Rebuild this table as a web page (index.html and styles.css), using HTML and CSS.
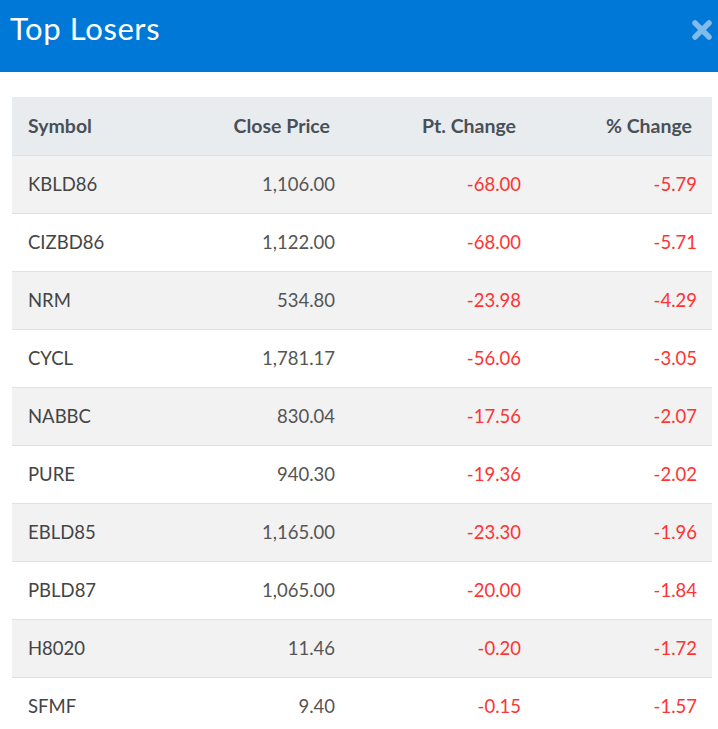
FILE: index.html
```html
<!DOCTYPE html>
<html>
<head>
<meta charset="utf-8">
<link rel="stylesheet" href="styles.css">
</head>
<body>
<div class="modal">
  <div class="modal-header">
    <h1 class="title">Top Losers</h1>
    <button class="close" aria-label="Close">
      <svg width="22" height="22" viewBox="0 0 22 22"><path d="M4 4 L18 18 M18 4 L4 18" stroke="#80bbec" stroke-width="5.5" stroke-linecap="round" fill="none"/></svg>
    </button>
  </div>
  <div class="modal-body">
    <table class="losers">
      <colgroup>
        <col class="c1"><col class="c2"><col class="c3"><col class="c4">
      </colgroup>
      <thead>
        <tr><th class="left">Symbol</th><th>Close Price</th><th>Pt. Change</th><th>% Change</th></tr>
      </thead>
      <tbody>
        <tr><td class="left">KBLD86</td><td>1,106.00</td><td class="neg">-68.00</td><td class="neg">-5.79</td></tr>
        <tr><td class="left">CIZBD86</td><td>1,122.00</td><td class="neg">-68.00</td><td class="neg">-5.71</td></tr>
        <tr><td class="left">NRM</td><td>534.80</td><td class="neg">-23.98</td><td class="neg">-4.29</td></tr>
        <tr><td class="left">CYCL</td><td>1,781.17</td><td class="neg">-56.06</td><td class="neg">-3.05</td></tr>
        <tr><td class="left">NABBC</td><td>830.04</td><td class="neg">-17.56</td><td class="neg">-2.07</td></tr>
        <tr><td class="left">PURE</td><td>940.30</td><td class="neg">-19.36</td><td class="neg">-2.02</td></tr>
        <tr><td class="left">EBLD85</td><td>1,165.00</td><td class="neg">-23.30</td><td class="neg">-1.96</td></tr>
        <tr><td class="left">PBLD87</td><td>1,065.00</td><td class="neg">-20.00</td><td class="neg">-1.84</td></tr>
        <tr><td class="left">H8020</td><td>11.46</td><td class="neg">-0.20</td><td class="neg">-1.72</td></tr>
        <tr><td class="left">SFMF</td><td>9.40</td><td class="neg">-0.15</td><td class="neg">-1.57</td></tr>
      </tbody>
    </table>
  </div>
</div>
</body>
</html>
```

FILE: styles.css
```css
html, body {
  margin: 0;
  padding: 0;
  background: #ffffff;
  font-family: Lato, "Noto Sans", sans-serif;
}

.modal {
  width: 718px;
}

.modal-header {
  height: 72px;
  background: #0078d7;
  display: flex;
  align-items: flex-start;
  justify-content: space-between;
  box-sizing: border-box;
  padding: 0 5px 0 10px;
}

.title {
  margin: 0;
  padding-top: 10px;
  color: #ffffff;
  font-size: 31px;
  font-weight: 400;
  line-height: 36px;
  letter-spacing: 0.6px;
}

.close {
  margin-top: 19px;
  padding: 0;
  border: 0;
  background: transparent;
  width: 22px;
  height: 22px;
  display: flex;
}

.modal-body {
  padding: 25px 6px 0 12px;
}

.losers {
  width: 700px;
  border-collapse: collapse;
  table-layout: fixed;
  font-size: 18.5px;
}

.c1 { width: 170px; }
.c2 { width: 168px; }
.c3 { width: 186px; }
.c4 { width: 176px; }

.losers th {
  height: 58px;
  box-sizing: border-box;
  background: #e9ecef;
  color: #495057;
  font-size: 19.5px;
  font-weight: 700;
  text-align: right;
  padding: 0 20px 0 16px;
  border-bottom: 1px solid #dee2e6;
  vertical-align: middle;
}

.losers td {
  height: 58px;
  box-sizing: border-box;
  text-align: right;
  color: #444444;
  padding: 0 15px 0 16px;
  border-bottom: 1px solid #dee2e6;
  vertical-align: middle;
}

.losers td:nth-child(2) {
  color: #555555;
}

.losers th.left,
.losers td.left {
  text-align: left;
}

.losers tbody tr:nth-child(odd) {
  background: #f2f2f2;
}

.losers td.neg {
  color: #ff3333;
}
```
